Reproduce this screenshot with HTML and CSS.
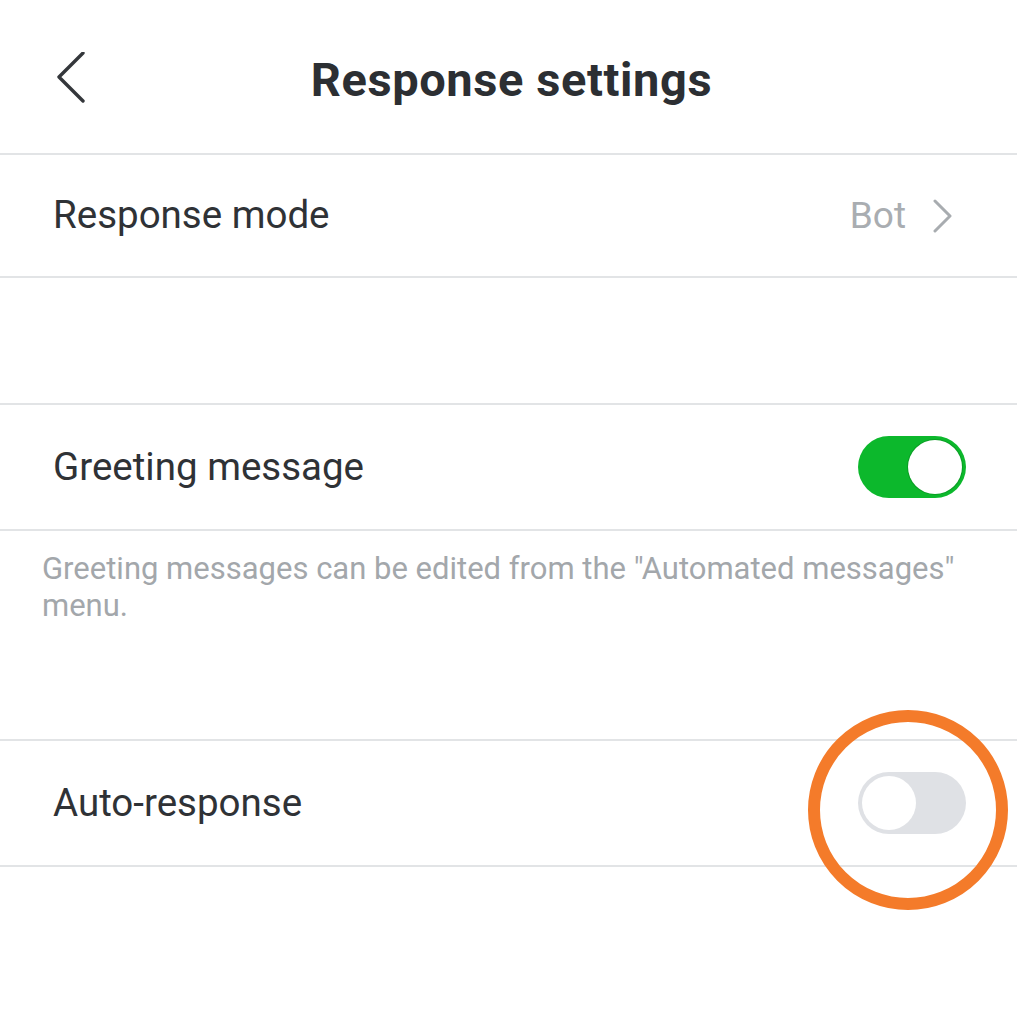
FILE: index.html
```html
<!DOCTYPE html>
<html>
<head>
<meta charset="utf-8">
<link rel="stylesheet" href="styles.css">
</head>
<body>
<div class="page">
  <header class="header">
    <svg class="back" width="40" height="60" viewBox="0 0 40 60">
      <path d="M26 1 L2 25 L26 49" fill="none" stroke="#34373b" stroke-width="3.4" stroke-linecap="round" stroke-linejoin="round"/>
    </svg>
    <h1 class="title">Response settings</h1>
  </header>
  <div class="row first">
    <span class="label">Response mode</span>
    <span class="value">Bot
      <svg class="chev" width="20" height="34" viewBox="0 0 20 34">
        <path d="M3 2 L18 17 L3 32" fill="none" stroke="#a8acb0" stroke-width="3" stroke-linecap="round" stroke-linejoin="round"/>
      </svg>
    </span>
  </div>
  <div class="spacer"></div>
  <div class="row">
    <span class="label">Greeting message</span>
    <span class="toggle on"><span class="knob"></span></span>
  </div>
  <p class="hint">Greeting messages can be edited from the "Automated messages" menu.</p>
  <div class="row">
    <span class="label">Auto-response</span>
    <span class="toggle off"><span class="knob"></span><span class="ring"></span></span>
  </div>
</div>
</body>
</html>
```

FILE: styles.css
```css
html, body {
  margin: 0;
  padding: 0;
  background: #ffffff;
}
body {
  font-family: Roboto, "Noto Sans", sans-serif;
  color: #2f3236;
  width: 1017px;
  height: 1024px;
  overflow: hidden;
}
.page {
  display: flex;
  flex-direction: column;
}
.header {
  position: relative;
  height: 153px;
  display: flex;
  align-items: center;
  justify-content: center;
  border-bottom: 2.5px solid #e2e4e6;
}
.back {
  position: absolute;
  left: 57px;
  top: 52px;
}
.title {
  margin: 0;
  font-size: 47px;
  font-weight: 700;
  letter-spacing: 0.6px;
  color: #2c2f33;
  padding-top: 6px;
  padding-left: 6px;
}
.row {
  height: 124px;
  display: flex;
  align-items: center;
  justify-content: space-between;
  padding: 0 51px 0 53px;
  border-bottom: 2.5px solid #e2e4e6;
  position: relative;
}
.row.first {
  height: 121px;
}
.spacer {
  height: 125px;
  border-bottom: 2.5px solid #e2e4e6;
}
.label {
  font-size: 38.5px;
  color: #2f3236;
  padding-bottom: 2px;
}
.value {
  display: flex;
  align-items: center;
  gap: 26px;
  font-size: 37px;
  color: #a9adb1;
  margin-right: 14px;
}
.chev {
  margin-top: 1px;
}
.toggle {
  position: relative;
  width: 108px;
  height: 62px;
  border-radius: 31px;
  box-sizing: border-box;
}
.toggle.on {
  background: #0cb82c;
}
.toggle.off {
  background: #dfe1e5;
}
.knob {
  position: absolute;
  top: 4px;
  width: 54px;
  height: 54px;
  border-radius: 50%;
  background: #ffffff;
}
.toggle.on .knob {
  right: 4px;
  box-shadow: 0 0 0 1px #0a9e24;
}
.toggle.off .knob {
  left: 4px;
}
.ring {
  position: absolute;
  left: -50px;
  top: -62px;
  width: 176px;
  height: 176px;
  border: 12px solid #f47b2a;
  border-radius: 50%;
}
.hint {
  margin: 0;
  height: 210px;
  padding: 19px 50px 0 42px;
  box-sizing: border-box;
  font-size: 31px;
  line-height: 37px;
  color: #a3a7ab;
  border-bottom: 2.5px solid #e2e4e6;
}
```
